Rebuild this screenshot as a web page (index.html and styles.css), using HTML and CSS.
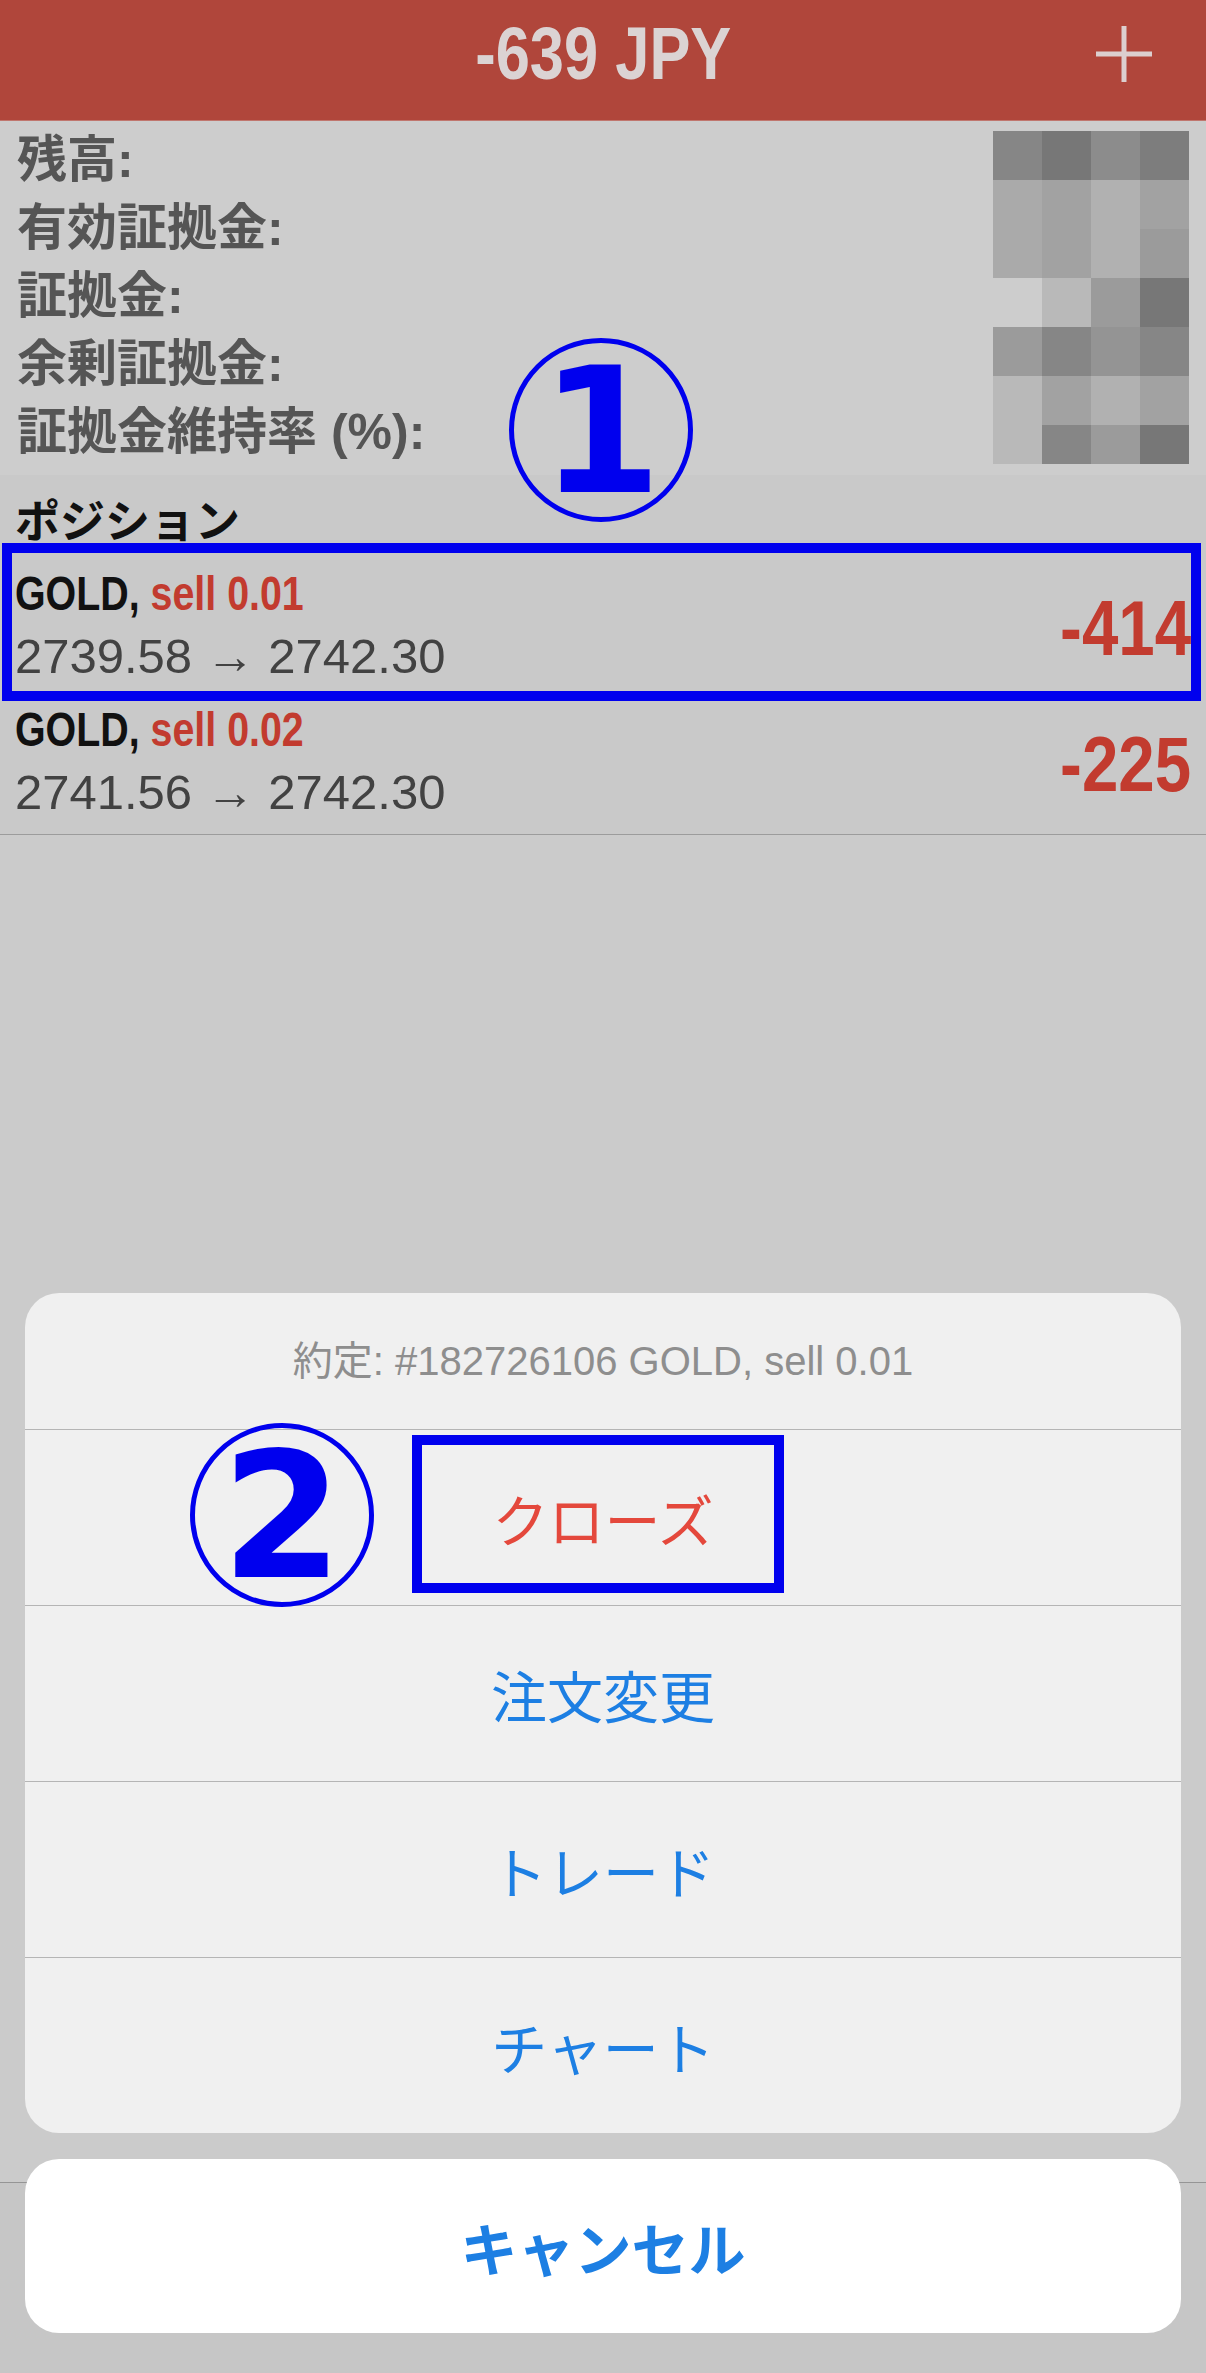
FILE: index.html
```html
<!DOCTYPE html>
<html lang="ja">
<head>
  <meta charset="UTF-8">
  <meta name="viewport" content="width=device-width, initial-scale=1.0">
  <title>ポジション</title>
  <link rel="stylesheet" href="styles.css">
</head>
<body>
  <div class="page">
    <header class="topbar">
      <span></span>
      <h1 class="balance">-639 JPY</h1>
      <svg class="plus" width="56" height="56" viewBox="0 0 56 56">
        <line x1="28" y1="0" x2="28" y2="56"/>
        <line x1="0" y1="28" x2="56" y2="28"/>
      </svg>
    </header>

    <section class="account">
      <ul class="labels">
        <li>残高:</li>
        <li>有効証拠金:</li>
        <li>証拠金:</li>
        <li>余剰証拠金:</li>
        <li>証拠金維持率 (%):</li>
      </ul>
      <div class="mosaic">
        <i class="c"></i><i class="a"></i><i class="d"></i><i class="b"></i>
        <i class="h"></i><i class="g"></i><i class="i"></i><i class="g"></i>
        <i class="h"></i><i class="g"></i><i class="i"></i><i class="f"></i>
        <i class="k"></i><i class="j"></i><i class="f"></i><i class="a"></i>
        <i class="f"></i><i class="c"></i><i class="e"></i><i class="c"></i>
        <i class="j"></i><i class="g"></i><i class="i"></i><i class="g"></i>
        <i class="j"></i><i class="c"></i><i class="f"></i><i class="a"></i>
      </div>
    </section>

    <section class="positions">
      <h2>ポジション</h2>
      <div class="pos">
        <div class="pos-info">
          <div class="pos-title"><span class="cond">GOLD, <span class="sell">sell 0.01</span></span></div>
          <div class="pos-price">2739.58 → 2742.30</div>
        </div>
        <div class="pos-profit"><span class="cond">-414</span></div>
      </div>
      <div class="pos last">
        <div class="pos-info">
          <div class="pos-title"><span class="cond">GOLD, <span class="sell">sell 0.02</span></span></div>
          <div class="pos-price">2741.56 → 2742.30</div>
        </div>
        <div class="pos-profit"><span class="cond">-225</span></div>
      </div>
    </section>

    <div class="filler"></div>
    <nav class="tabbar"></nav>
  </div>

  <div class="sheet">
    <div class="sheet-group">
      <div class="sheet-title">約定: #182726106 GOLD, sell 0.01</div>
      <button class="sheet-btn danger">クローズ</button>
      <button class="sheet-btn">注文変更</button>
      <button class="sheet-btn">トレード</button>
      <button class="sheet-btn">チャート</button>
    </div>
    <button class="sheet-cancel">キャンセル</button>
  </div>

  <!-- annotations -->
  <div class="mark mark-one">1</div>
  <div class="box box-one"></div>
  <div class="mark mark-two">2</div>
  <div class="box box-two"></div>
</body>
</html>
```

FILE: styles.css
```css
body {
  margin: 0;
  padding: 0;
  position: relative;
  width: 1206px;
  height: 2373px;
  overflow: hidden;
  background-color: #cbcbcb;
  font-family: "Liberation Sans", "Noto Sans CJK JP", sans-serif;
}
.page {
  display: flex;
  flex-direction: column;
  height: 2373px;
}
/* no narrow face installed, squeeze the bold condensed bits */
.cond {
  display: inline-block;
  transform: scaleX(0.82);
  transform-origin: left center;
  white-space: nowrap;
}
.topbar {
  display: grid;
  grid-template-columns: 1fr auto 1fr;
  align-items: center;
  height: 108px;
  padding-bottom: 12px;
  background-color: #b0463b;
  border-bottom: 1px solid #c0766e;
}
.balance {
  margin: 0;
  font-weight: bold;
  font-size: 74px;
  line-height: 74px;
  color: #dbd3d3;
  transform: scaleX(0.83);
}
.plus {
  justify-self: end;
  margin-right: 54px;
  stroke: #dccfcf;
  stroke-width: 5;
}
.account {
  display: flex;
  justify-content: space-between;
  align-items: flex-start;
  height: 340px;
  padding: 5px 17px 9px 17px;
  background-color: #cdcdcd;
}
.labels {
  list-style: none;
  margin: 0;
  padding: 0;
  font-weight: bold;
  font-size: 50px;
  line-height: 68px;
  color: #555;
}
.mosaic {
  display: grid;
  grid-template-columns: repeat(4, 49px);
  grid-template-rows: repeat(6, 49px) 39px;
  margin-top: 5px;
}
.mosaic .a { background-color: #777; }
.mosaic .b { background-color: #7d7d7d; }
.mosaic .c { background-color: #868686; }
.mosaic .d { background-color: #8c8c8c; }
.mosaic .e { background-color: #949494; }
.mosaic .f { background-color: #9b9b9b; }
.mosaic .g { background-color: #a2a2a2; }
.mosaic .h { background-color: #aaaaaa; }
.mosaic .i { background-color: #b1b1b1; }
.mosaic .j { background-color: #b9b9b9; }
.mosaic .k { background-color: #cdcdcd; }

.positions {
  background-color: #c9c9c9;
}
.positions h2 {
  margin: 0;
  height: 87px;
  padding-left: 15px;
  font-family: "Noto Sans CJK JP", sans-serif;
  font-weight: bold;
  font-size: 45px;
  line-height: 87px;
  color: #111;
}
.pos {
  display: flex;
  justify-content: space-between;
  align-items: center;
  height: 136px;
  padding: 0 15px;
  box-sizing: border-box;
}
.pos.last {
  border-bottom: 1px solid #9c9c9c;
  height: 137px;
}
.pos-info {
  align-self: flex-start;
  padding-top: 4px;
}
.pos-title {
  font-weight: bold;
  font-size: 48px;
  line-height: 56px;
  color: #111;
}
.sell {
  color: #c23b2f;
}
.pos-price {
  margin-top: 6px;
  font-size: 49px;
  line-height: 56px;
  color: #424242;
}
.pos-profit {
  margin-bottom: 4px;
  font-weight: bold;
  font-size: 77px;
  line-height: 77px;
  color: #c23b2f;
}
.pos-profit .cond {
  transform: scaleX(0.85);
  transform-origin: right center;
}
.filler {
  flex: 1;
}
.tabbar {
  height: 190px;
  background-color: #c6c6c6;
  border-top: 1px solid #959595;
}

/* action sheet */
.sheet {
  position: absolute;
  left: 25px;
  right: 25px;
  bottom: 40px;
  display: flex;
  flex-direction: column;
  gap: 26px;
}
.sheet-group {
  display: flex;
  flex-direction: column;
  background-color: #f0f0f0;
  border-radius: 34px;
  overflow: hidden;
}
.sheet-title {
  height: 136px;
  line-height: 136px;
  text-align: center;
  font-size: 40px;
  color: #8e8e8e;
}
.sheet-btn, .sheet-cancel {
  display: block;
  width: 100%;
  margin: 0;
  padding: 0;
  border: none;
  background: none;
  font-family: "Noto Sans CJK JP", sans-serif;
  font-size: 56px;
  color: #1d7fe3;
  text-align: center;
  cursor: pointer;
}
.sheet-btn {
  height: 176px;
  border-top: 1px solid #b5b5b5;
}
.sheet-btn.danger {
  color: #e4483c;
}
.sheet-cancel {
  height: 174px;
  background-color: #fff;
  border-radius: 34px;
  font-weight: bold;
  font-size: 57px;
}

/* annotations */
.mark {
  position: absolute;
  width: 184px;
  height: 184px;
  box-sizing: border-box;
  border: 5px solid #0000ee;
  border-radius: 50%;
  display: flex;
  align-items: center;
  justify-content: center;
  padding-top: 4px;
  font-family: "DejaVu Sans", sans-serif;
  font-weight: bold;
  font-size: 174px;
  line-height: 1;
  color: #0000ee;
}
.mark-one {
  left: 509px;
  top: 338px;
}
.mark-two {
  left: 190px;
  top: 1423px;
}
.box {
  position: absolute;
  box-sizing: border-box;
  border: 10px solid #0000ee;
}
.box-one {
  left: 2px;
  top: 543px;
  width: 1199px;
  height: 158px;
}
.box-two {
  left: 412px;
  top: 1435px;
  width: 372px;
  height: 158px;
}
```
